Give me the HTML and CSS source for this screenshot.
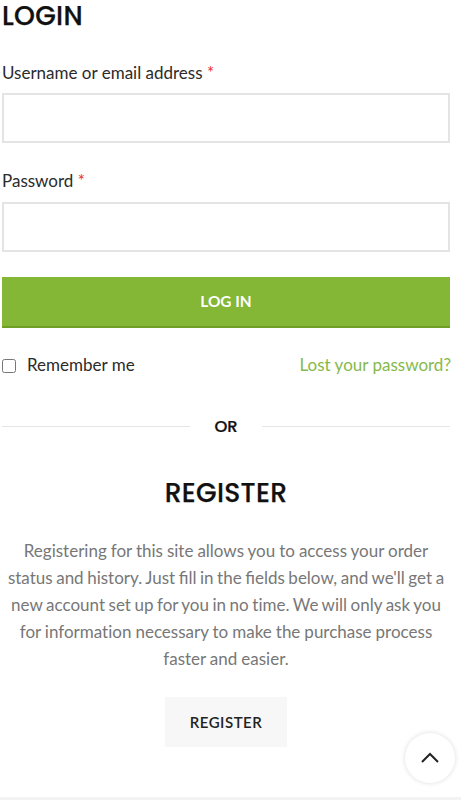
FILE: index.html
```html
<!DOCTYPE html>
<html lang="en">
<head>
<meta charset="utf-8">
<title>Login</title>
<link rel="stylesheet" href="styles.css">
</head>
<body>
<main class="account">
  <form class="login">
    <h2 class="title">LOGIN</h2>
    <label class="label" for="user">Username or email address <b class="required">*</b></label>
    <input class="field" id="user" type="text">
    <label class="label password-label" for="pass">Password <b class="required">*</b></label>
    <input class="field" id="pass" type="password">
    <button class="submit" type="button">LOG IN</button>
    <div class="options">
      <label class="remember"><input class="check" type="checkbox"><span>Remember me</span></label>
      <a class="lost">Lost your password?</a>
    </div>
  </form>
  <div class="divider"><span>OR</span></div>
  <section class="register">
    <h2 class="title register-title">REGISTER</h2>
    <p class="intro"><span class="line">Registering for this site allows you to access your order</span> <span class="line tight">status and history. Just fill in the fields below, and we'll get a</span> <span class="line tight">new account set up for you in no <span class="plain">time</span>. We will only ask you</span> <span class="line">for <span class="plain">information</span> necessary to make the purchase process</span> <span class="line">faster and easier.</span></p>
    <button class="register-button" type="button">REGISTER</button>
  </section>
</main>
<div class="bottom-bar"></div>
<button class="to-top" type="button" aria-label="Back to top">
  <svg width="20" height="12" viewBox="0 0 20 12"><path d="M2 10L10 2L18 10" fill="none" stroke="#222" stroke-width="2"/></svg>
</button>
</body>
</html>
```
FILE: styles.css
```css
* { box-sizing: border-box; }
body { margin: 0; height: 800px; overflow: hidden; background: #fff; color: #2b2b2b; font: 400 17px/27px Lato, sans-serif; position: relative; }
.account { width: 448px; margin-left: 2px; }
.login { display: flex; flex-direction: column; }
.title { margin: 0; font: 500 26.6px/32px "Poppins", Inter, sans-serif; letter-spacing: .3px; color: #111; -webkit-text-stroke: .25px #111; }
.label { display: block; height: 27px; margin: 27px 0 7px; white-space: nowrap; }
.required { color: #e83038; font-weight: 400; }
.field { width: 448px; height: 50px; margin: 0; border: 2px solid #e4e4e4; background: #fff; }
.password-label { margin: 24px 0 8px; }
.submit { height: 51px; margin-top: 25px; border: 0; border-bottom: 2px solid #709f26; background: #83b735; color: #fff; font: 700 15.4px/49px Lato, sans-serif; padding: 0; }
.options { display: flex; justify-content: space-between; margin-top: 23px; height: 27px; white-space: nowrap; }
.remember { display: flex; align-items: center; }
.check { width: 14px; height: 14px; margin: 2px 11px 0 0; }
.lost { color: #86b94b; margin-right: -1px; }
.divider { display: flex; align-items: center; gap: 24px; margin-top: 35px; height: 27px; color: #111; font: 500 16.4px/27px "Poppins", Inter, sans-serif; -webkit-text-stroke: .2px #111; }
.divider::before, .divider::after { content: ""; flex: 1; height: 1px; background: #e5e5e5; }
.register { display: flex; flex-direction: column; align-items: center; }
.register-title { margin-top: 37px; }
.intro { margin: 28px 0 0; color: #777; text-align: center; white-space: nowrap; line-height: 27px; }
.line { display: block; word-spacing: -.35px; }
.tight { word-spacing: -.8px; }
.plain { font-variant-ligatures: none; }
.register-button { width: 122px; height: 50px; margin-top: 25px; border: 0; background: #f7f7f7; color: #222; font: 600 15px/50px Lato, sans-serif; letter-spacing: .5px; padding: 0; }
.bottom-bar { position: absolute; left: 0; right: 0; bottom: 0; height: 3px; background: #f3f3f3; }
.to-top { position: absolute; left: 405px; top: 733px; width: 50px; height: 50px; border: 0; border-radius: 50%; background: #fff; box-shadow: 0 0 5px rgba(0,0,0,.14); display: flex; align-items: center; justify-content: center; padding: 0; }
```
